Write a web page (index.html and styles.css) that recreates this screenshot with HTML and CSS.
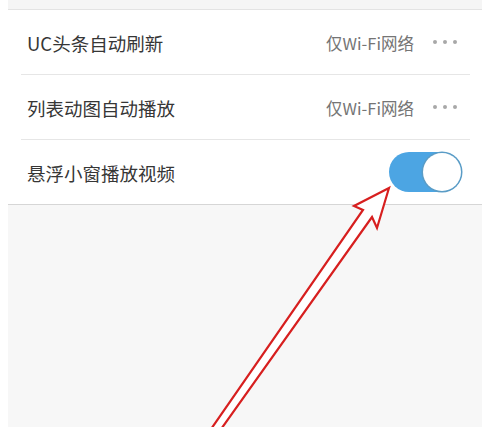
FILE: index.html
```html
<!DOCTYPE html>
<html lang="zh">
<head>
    <meta charset="UTF-8">
    <meta name="viewport" content="width=device-width, initial-scale=1.0">
    <title>设置</title>
    <link rel="stylesheet" href="styles.css">
</head>
<body>
    <div class="screen">
        <div class="top-strip"></div>

        <div class="settings">
            <div class="row">
                <span class="label">UC头条自动刷新</span>
                <span class="value">仅Wi-Fi网络</span>
                <span class="more"><i></i><i></i><i></i></span>
            </div>
            <div class="row">
                <span class="label">列表动图自动播放</span>
                <span class="value">仅Wi-Fi网络</span>
                <span class="more"><i></i><i></i><i></i></span>
            </div>
            <div class="row last">
                <span class="label">悬浮小窗播放视频</span>
                <span class="toggle on"><span class="knob"></span></span>
            </div>
        </div>

        <div class="empty"></div>
    </div>

    <!-- annotation arrow drawn over the screenshot -->
    <svg class="arrow" width="482" height="427" viewBox="0 0 482 427">
        <polygon points="389,188 354,206 363,210 209,432 219,432 372,217 377,228"
                 fill="#ffffff" stroke="#d71f1f" stroke-width="2.2" stroke-linejoin="miter"/>
    </svg>
</body>
</html>
```

FILE: styles.css
```css
/* Base */
body {
    margin: 0;
    padding: 0;
    background-color: #ffffff;
    font-family: "Noto Sans CJK SC", "Noto Sans", sans-serif;
    overflow: hidden;
}
.screen {
    margin-left: 8px;
    height: 427px;
    background-color: #f7f7f7;
}
.top-strip {
    height: 9px;
    background-color: #f5f5f5;
    border-bottom: 1px solid #e3e3e3;
}
/* Settings list */
.settings {
    background-color: #ffffff;
    border-bottom: 1px solid #d6d6d6;
}
.row {
    height: 64px;
    margin: 0 12px 0 13px;
    padding: 0 5px 0 6px;
    display: flex;
    align-items: center;
    border-bottom: 1px solid #e6e6e6;
}
.row.last {
    border-bottom: none;
}
.label {
    flex: 1;
    font-size: 18.5px;
    color: #363636;
    padding-top: 2px;
}
.value {
    font-size: 16.5px;
    color: #757575;
    padding-top: 2px;
}
.more {
    display: flex;
    gap: 6px;
    margin-left: 19px;
    margin-right: 8px;
}
.more i {
    width: 4px;
    height: 4px;
    border-radius: 50%;
    background-color: #a8a8a8;
}
/* Toggle switch */
.toggle {
    width: 73px;
    height: 40px;
    border-radius: 20px;
    background-color: #4ca5e3;
    display: flex;
    justify-content: flex-end;
    margin-right: 3px;
}
.knob {
    width: 38px;
    height: 38px;
    margin: 1px;
    border-radius: 50%;
    background-color: #ffffff;
    box-shadow: 0 0 0 1.5px #5a9cc6;
}
.empty {
    height: 200px;
}
/* Overlay */
.arrow {
    position: absolute;
    left: 0;
    top: 0;
}
```
